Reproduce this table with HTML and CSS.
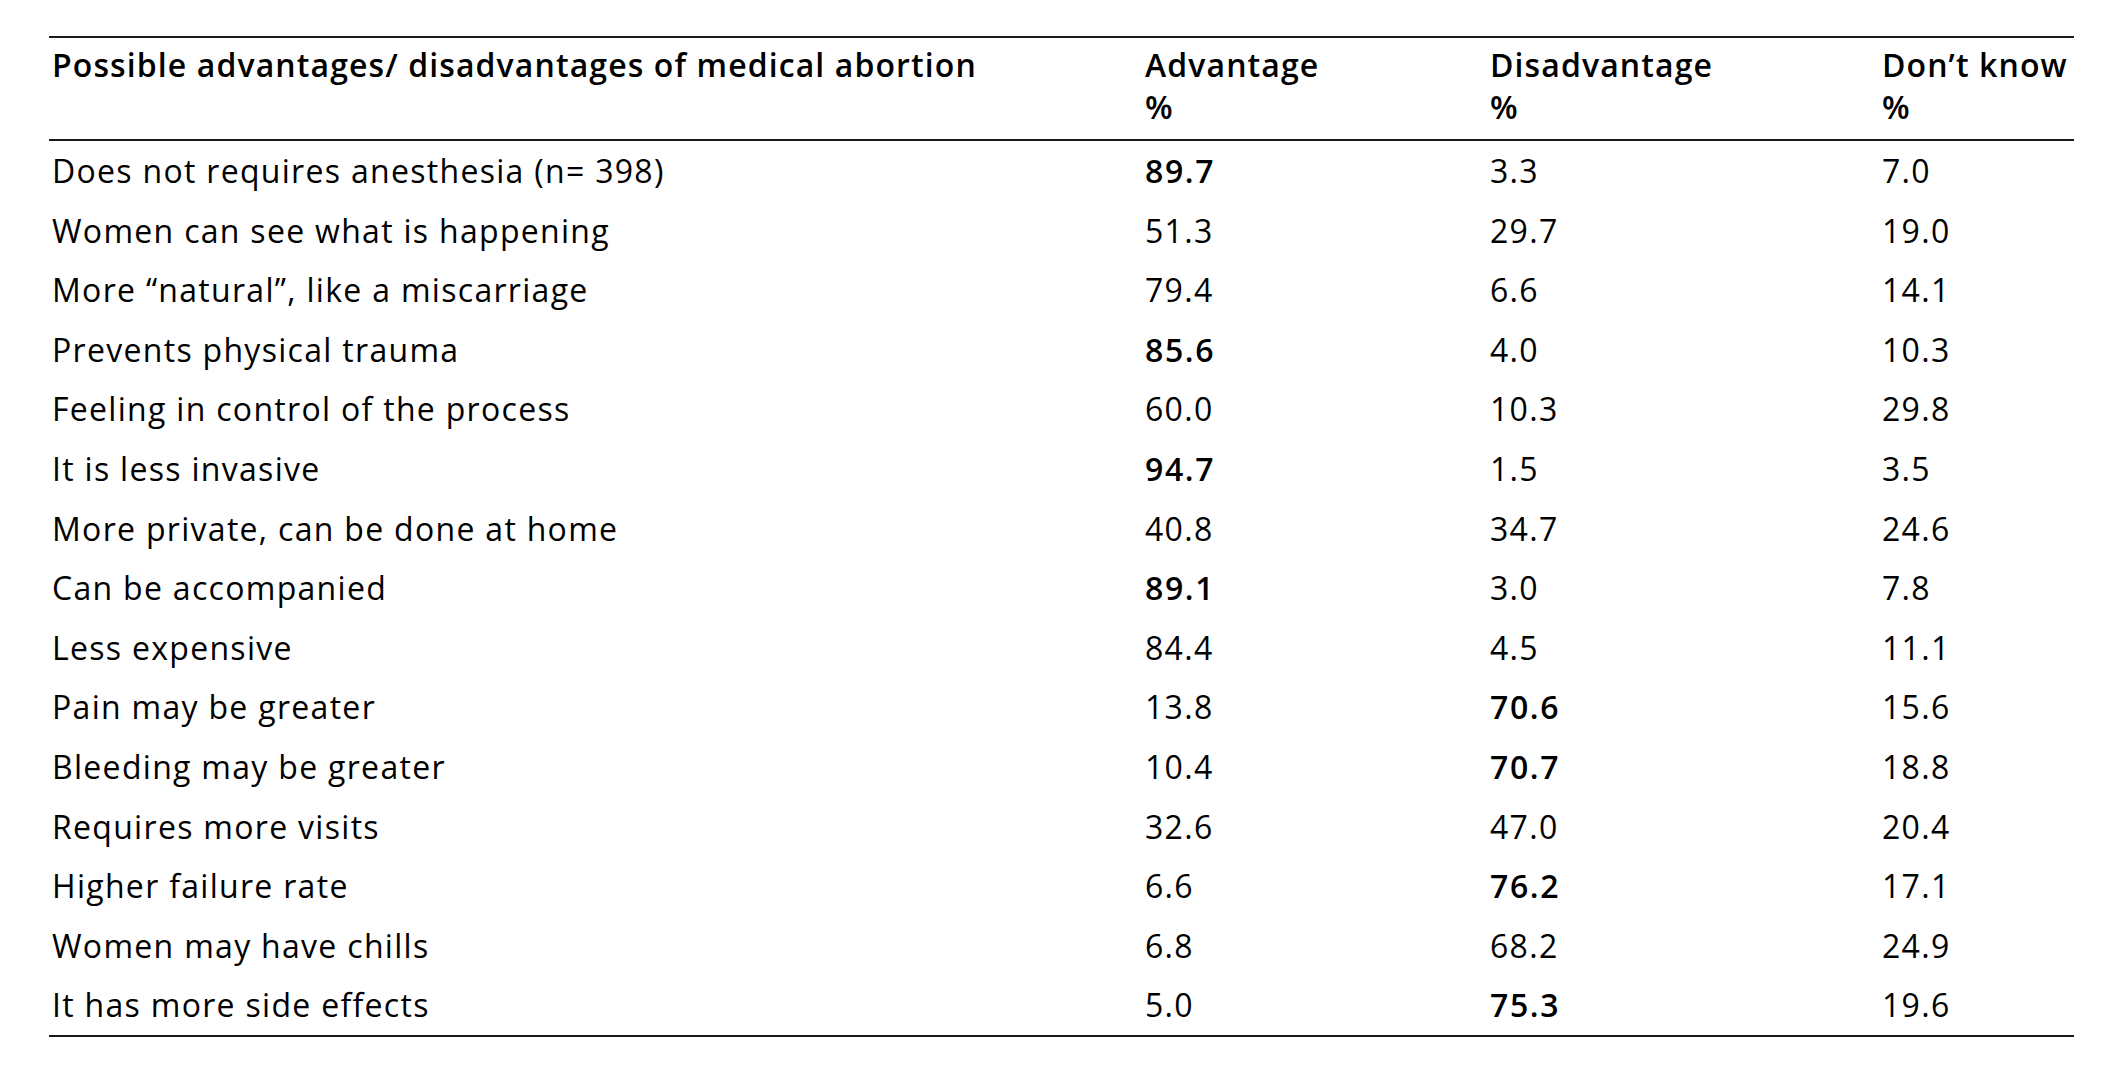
FILE: index.html
```html
<!DOCTYPE html>
<html lang="en">
<head>
<meta charset="utf-8">
<title>Possible advantages/ disadvantages of medical abortion</title>
<link rel="stylesheet" href="styles.css">
</head>
<body>
<div class="page">
<table class="data">
  <colgroup>
    <col class="c-item">
    <col class="c-adv">
    <col class="c-dis">
    <col class="c-dk">
  </colgroup>
  <thead>
    <tr>
      <th>Possible advantages/ disadvantages of medical abortion</th>
      <th>Advantage<br>%</th>
      <th>Disadvantage<br>%</th>
      <th>Don’t know<br>%</th>
    </tr>
  </thead>
  <tbody>
    <tr><td>Does not requires anesthesia (n= 398)</td><td class="b">89.7</td><td>3.3</td><td>7.0</td></tr>
    <tr><td>Women can see what is happening</td><td>51.3</td><td>29.7</td><td>19.0</td></tr>
    <tr><td>More “natural”, like a miscarriage</td><td>79.4</td><td>6.6</td><td>14.1</td></tr>
    <tr><td>Prevents physical trauma</td><td class="b">85.6</td><td>4.0</td><td>10.3</td></tr>
    <tr><td>Feeling in control of the process</td><td>60.0</td><td>10.3</td><td>29.8</td></tr>
    <tr><td>It is less invasive</td><td class="b">94.7</td><td>1.5</td><td>3.5</td></tr>
    <tr><td>More private, can be done at home</td><td>40.8</td><td>34.7</td><td>24.6</td></tr>
    <tr><td>Can be accompanied</td><td class="b">89.1</td><td>3.0</td><td>7.8</td></tr>
    <tr><td>Less expensive</td><td>84.4</td><td>4.5</td><td>11.1</td></tr>
    <tr><td>Pain may be greater</td><td>13.8</td><td class="b">70.6</td><td>15.6</td></tr>
    <tr><td>Bleeding may be greater</td><td>10.4</td><td class="b">70.7</td><td>18.8</td></tr>
    <tr><td>Requires more visits</td><td>32.6</td><td>47.0</td><td>20.4</td></tr>
    <tr><td>Higher failure rate</td><td>6.6</td><td class="b">76.2</td><td>17.1</td></tr>
    <tr><td>Women may have chills</td><td>6.8</td><td>68.2</td><td>24.9</td></tr>
    <tr><td>It has more side effects</td><td>5.0</td><td class="b">75.3</td><td>19.6</td></tr>
  </tbody>
</table>
</div>
</body>
</html>
```

FILE: styles.css
```css
html, body {
  margin: 0;
  padding: 0;
  background: #ffffff;
}

.page {
  padding: 36px 0 0 49px;
}

.data {
  width: 2025px;
  table-layout: fixed;
  border-collapse: collapse;
  font-family: "Open Sans", "Noto Sans", sans-serif;
  font-size: 32px;
  letter-spacing: 1.3px;
  color: #000;
  border-top: 2px solid #1a1a1a;
  border-bottom: 2px solid #1a1a1a;
}

.c-item { width: 1093px; }
.c-adv  { width: 345px; }
.c-dis  { width: 392px; }
.c-dk   { width: 195px; }

.data th {
  text-align: left;
  vertical-align: top;
  font-weight: 600;
  letter-spacing: 1.1px;
  line-height: 42px;
  padding: 6px 0 11px 3px;
  white-space: nowrap;
  border-bottom: 2px solid #1a1a1a;
}

.data td {
  text-align: left;
  padding: 0 0 0 3px;
  height: 59.6px;
  line-height: 59.6px;
  white-space: nowrap;
}

.data td.b {
  font-weight: 600;
  letter-spacing: 1.6px;
}
```
